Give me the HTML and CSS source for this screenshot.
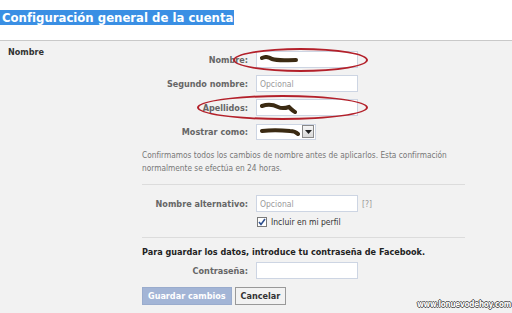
FILE: index.html
```html
<!DOCTYPE html>
<html lang="es">
<head>
<meta charset="utf-8">
<title>Configuración general de la cuenta</title>
<link rel="stylesheet" href="styles.css">
</head>
<body>
<header class="title-bar">
  <h1 class="title"><span class="sel">Configuración general de la cuenta</span></h1>
</header>
<section class="panel">
  <div class="section-label">Nombre</div>
  <div class="section-body">
    <div class="form-grid">
      <div class="row">
        <label class="lbl">Nombre:</label>
        <div class="field">
          <span class="input">
            <svg class="scribble" width="40" height="10" viewBox="0 0 40 10"><path d="M2 3 C6 1 9 2 12 4 C18 6 26 5 36 5" stroke="#3b2a12" stroke-width="4" fill="none" stroke-linecap="round"/></svg>
          </span>
        </div>
        <span class="oval oval-nombre"></span>
      </div>
      <div class="row">
        <label class="lbl">Segundo nombre:</label>
        <div class="field"><span class="input placeholder">Opcional</span></div>
      </div>
      <div class="row">
        <label class="lbl">Apellidos:</label>
        <div class="field">
          <span class="input">
            <svg class="scribble" width="40" height="12" viewBox="0 0 40 12"><path d="M2 4 C8 2 14 3 18 5 C22 7 26 6 29 5 C31 7 33 9 35 10" stroke="#3b2a12" stroke-width="4" fill="none" stroke-linecap="round"/></svg>
          </span>
        </div>
        <span class="oval oval-apellidos"></span>
      </div>
      <div class="row">
        <label class="lbl">Mostrar como:</label>
        <div class="field">
          <span class="select">
            <span class="select-value">
              <svg class="scribble" width="40" height="9" viewBox="0 0 40 9"><path d="M2 4 C10 3 20 3 30 4 C34 4 36 5 38 7" stroke="#3b2a12" stroke-width="4" fill="none" stroke-linecap="round"/></svg>
            </span>
            <span class="select-btn"><svg width="7" height="4" viewBox="0 0 7 4"><path d="M0 0 H7 L3.5 4 Z" fill="#222"/></svg></span>
          </span>
        </div>
      </div>
    </div>
    <p class="note">Confirmamos todos los cambios de nombre antes de aplicarlos. Esta confirmación normalmente se efectúa en 24 horas.</p>
    <hr class="sep">
    <div class="form-grid">
      <div class="row">
        <label class="lbl">Nombre alternativo:</label>
        <div class="field"><span class="input placeholder">Opcional</span><span class="help">[?]</span></div>
      </div>
      <div class="row row-check">
        <span></span>
        <div class="field">
          <span class="checkbox"><svg width="8" height="8" viewBox="0 0 8 8"><path d="M1 4 L3 6.5 L7 1" stroke="#2d4f8e" stroke-width="1.6" fill="none"/></svg></span>
          <span class="check-text">Incluir en mi perfil</span>
        </div>
      </div>
    </div>
    <hr class="sep sep2">
    <p class="pw-title">Para guardar los datos, introduce tu contraseña de Facebook.</p>
    <div class="form-grid">
      <div class="row">
        <label class="lbl">Contraseña:</label>
        <div class="field"><span class="input"></span></div>
      </div>
    </div>
    <div class="actions">
      <button class="btn btn-primary" type="button">Guardar cambios</button>
      <button class="btn btn-cancel" type="button">Cancelar</button>
    </div>
  </div>
  <div class="watermark">www.lonuevodehoy.com</div>
</section>
</body>
</html>
```

FILE: styles.css
```css
html, body {
  margin: 0;
  padding: 0;
  height: 100%;
}
body {
  font-family: "DejaVu Sans", sans-serif;
  font-stretch: condensed;
  background: #f2f2f2;
  color: #333;
  overflow: hidden;
}
.title-bar {
  background: #fff;
  height: 40px;
  padding-top: 8px;
  box-sizing: border-box;
}
.title {
  margin: 0;
  font-size: 13px;
  font-weight: bold;
  line-height: 19px;
}
.sel {
  background: #3a8fe4;
  color: #fff;
  padding: 0 1px 0 2px;
}
.panel {
  position: relative;
  border-top: 1px solid #c9c9c9;
  display: flex;
  height: calc(100% - 41px);
}
.section-label {
  width: 134px;
  padding: 6px 0 0 8px;
  font-size: 9px;
  font-weight: bold;
  color: #333;
}
.section-body {
  width: 323px;
  padding-top: 10px;
}
.form-grid {
  display: flex;
  flex-direction: column;
  gap: 7px;
}
.row {
  position: relative;
  display: grid;
  grid-template-columns: 106px 1fr;
  column-gap: 8px;
  align-items: center;
  height: 17px;
}
.lbl {
  text-align: right;
  font-size: 9px;
  font-weight: bold;
  color: #666;
}
.field {
  display: flex;
  align-items: center;
  gap: 4px;
}
.input {
  position: relative;
  display: flex;
  align-items: center;
  box-sizing: border-box;
  width: 102px;
  height: 17px;
  background: #fff;
  border: 1px solid #cdd5e3;
  padding-left: 3px;
  font-size: 8.5px;
}
.placeholder {
  color: #9a9a9a;
}
.scribble {
  display: block;
}
.help {
  color: #999;
  font-size: 8.5px;
}
.oval {
  position: absolute;
  border: 2px solid #b3202a;
  border-radius: 50%;
  pointer-events: none;
}
.oval-nombre {
  left: 91px;
  top: -3px;
  width: 131px;
  height: 20px;
}
.oval-apellidos {
  left: 55px;
  top: -4px;
  width: 167px;
  height: 21px;
}
.select {
  display: flex;
  align-items: center;
  gap: 2px;
  box-sizing: border-box;
  width: 60px;
  height: 16px;
  background: #fff;
  border: 1px solid #cdd5e3;
  padding: 0 1px 0 3px;
}
.select-value {
  flex: 1;
}
.select-btn {
  display: flex;
  align-items: center;
  justify-content: center;
  width: 14px;
  height: 13px;
  box-sizing: border-box;
  border: 1px solid #8a8a8a;
  background: linear-gradient(#f6f6f6, #d9d9d9);
}
.note {
  margin: 9px 0 0;
  font-size: 8.25px;
  line-height: 13px;
  color: #777;
}
.sep {
  margin: 9px 0 0;
  border: 0;
  border-top: 1px solid #dcdcdc;
  height: 0;
}
.sep + .form-grid {
  margin-top: 10px;
  gap: 4px;
}
.row-check {
  height: 11px;
}
.checkbox {
  display: flex;
  align-items: center;
  justify-content: center;
  box-sizing: border-box;
  width: 10px;
  height: 10px;
  margin-left: 1px;
  background: #fff;
  border: 1px solid #7a7a7a;
}
.check-text {
  font-size: 8.5px;
  color: #333;
}
.sep2 {
  margin-top: 10px;
}
.pw-title {
  margin: 9px 0 0;
  font-size: 9px;
  font-weight: bold;
  color: #222;
}
.pw-title + .form-grid {
  margin-top: 5px;
}
.actions {
  display: flex;
  gap: 3px;
  margin-top: 8px;
}
.btn {
  font-family: inherit;
  font-stretch: condensed;
  font-size: 9px;
  font-weight: bold;
  height: 18px;
  padding: 0 5px;
  box-sizing: border-box;
}
.btn-primary {
  background: #a3b5d6;
  border: 1px solid #9aaccd;
  color: #fff;
}
.btn-cancel {
  background: #f2f2f2;
  border: 1px solid #999;
  color: #333;
}
.watermark {
  position: absolute;
  right: 1px;
  bottom: 4px;
  font-size: 8px;
  font-weight: bold;
  color: #fff;
  letter-spacing: -0.2px;
  text-shadow: 1px 0 0 #555, -1px 0 0 #555, 0 1px 0 #555, 0 -1px 0 #555;
}
```
